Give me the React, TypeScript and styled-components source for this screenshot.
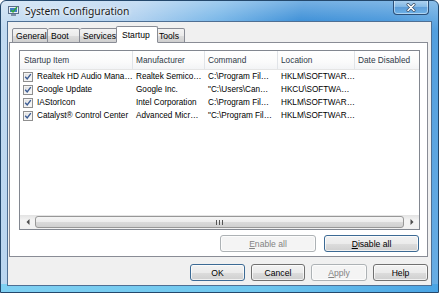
import React from "react";
import styled, { createGlobalStyle } from "styled-components";

const Global = createGlobalStyle`
  html, body { margin: 0; padding: 0; background: #fff; }
  body { font-family: "Liberation Sans", Arial, sans-serif; }
`;

const Window = styled.div`
  box-sizing: border-box;
  width: 439px;
  height: 293px;
  border: 1px solid #24486c;
  border-radius: 6px 6px 0 0;
  background:
    linear-gradient(to bottom, rgba(255,255,255,0.35) 0px, rgba(255,255,255,0.1) 20px, rgba(255,255,255,0) 30px),
    linear-gradient(100deg, #c3dbf1 0%, #aacdee 28%, #6cb0e6 45%, #2c86d4 62%, #3a8fd8 80%, #6aaee4 100%);
  display: flex;
  flex-direction: column;
  padding: 0 6px 6px 6px;
  position: relative;
  overflow: hidden;
  &::after {
    content: "";
    position: absolute;
    left: 0; right: 0; bottom: 0; height: 8px;
    background: linear-gradient(to right, #7fd0f2, #6ec6ee 60%, #4aa4e4);
    z-index: 0;
  }
`;

const TitleBar = styled.div`
  height: 20px;
  display: flex;
  align-items: center;
  gap: 5px;
  position: relative;
  z-index: 1;
`;

const TitleText = styled.span`
  font-family: "Noto Sans", "Liberation Sans", sans-serif;
  font-size: 10.3px;
  color: #1a1a1a;
  text-shadow: 0 0 6px rgba(255,255,255,0.9), 0 0 3px rgba(255,255,255,0.9);
`;

const CloseButton = styled.div`
  position: absolute;
  top: -1px;
  right: 3px;
  width: 36px;
  height: 15px;
  box-sizing: border-box;
  border: 1px solid #2c4f78;
  border-top: none;
  border-radius: 0 0 4px 4px;
  background: linear-gradient(to bottom, rgba(255,255,255,0.35), rgba(255,255,255,0.08) 50%, rgba(40,110,190,0.3) 51%, rgba(120,190,240,0.4));
  box-shadow: inset 0 0 0 1px rgba(255,255,255,0.45);
  display: flex;
  align-items: center;
  justify-content: center;
`;

const Client = styled.div`
  flex: 1;
  box-sizing: border-box;
  background: #f0f0f0;
  border: 1px solid #4f6f93;
  display: flex;
  flex-direction: column;
  padding: 5px 3px 3px 1px;
  position: relative;
  z-index: 1;
`;

const TabRow = styled.div`
  display: flex;
  align-items: flex-end;
  height: 16px;
  padding-left: 3px;
  position: relative;
  z-index: 2;
  margin-bottom: -1px;
`;

const Tab = styled.div<{ $active?: boolean; $w: number }>`
  box-sizing: border-box;
  width: ${(p) => p.$w}px;
  height: ${(p) => (p.$active ? 17 : 15)}px;
  margin: ${(p) => (p.$active ? "0 -2px 0 -2px" : "0")};
  border: 1px solid #898c95;
  border-left-width: ${(p) => (p.$active ? 1 : 0)}px;
  border-bottom: ${(p) => (p.$active ? "1px solid #fff" : "1px solid #898c95")};
  border-radius: 2px 2px 0 0;
  background: ${(p) =>
    p.$active ? "#fff" : "linear-gradient(to bottom, #f3f3f3 0%, #ebebeb 50%, #dddddd 51%, #cfcfcf 100%)"};
  font-size: 8.6px;
  color: #000;
  display: flex;
  align-items: center;
  padding-left: ${(p) => (p.$active ? 5 : 3)}px;
  position: relative;
  z-index: ${(p) => (p.$active ? 3 : 1)};
  &:first-child { border-left-width: 1px; }
`;

const Panel = styled.div`
  box-sizing: border-box;
  height: 215px;
  border: 1px solid #898c95;
  background: #fff;
  display: flex;
  flex-direction: column;
  padding: 7px 7px 0 9px;
`;

const List = styled.div`
  box-sizing: border-box;
  height: 180px;
  border: 1px solid #828790;
  background: #fff;
  display: flex;
  flex-direction: column;
`;

const Cols = "113px 72px 73px 77px 1fr";

const Header = styled.div`
  display: grid;
  grid-template-columns: ${Cols};
  height: 18px;
  flex-shrink: 0;
  background: linear-gradient(to bottom, #ffffff, #fbfbfb 60%, #f3f4f6);
  border-bottom: 1px solid #e5e5e5;
`;

const HeadCell = styled.div<{ $pad: number }>`
  font-size: 8.3px;
  color: #2f3a48;
  display: flex;
  align-items: center;
  padding-left: ${(p) => p.$pad}px;
  border-right: 1px solid #e1e4e8;
  white-space: nowrap;
  &:last-child { border-right: none; }
`;

const Rows = styled.div`
  flex: 1;
`;

const Row = styled.div`
  display: grid;
  grid-template-columns: ${Cols};
  height: 13px;
`;

const Cell = styled.div<{ $pad: number }>`
  font-size: 8.2px;
  color: #000;
  display: flex;
  align-items: center;
  gap: 4px;
  padding-left: ${(p) => p.$pad}px;
  white-space: nowrap;
`;

const Check = styled.span`
  box-sizing: border-box;
  width: 10px;
  height: 10px;
  flex-shrink: 0;
  border: 1px solid #8f8f8f;
  background: linear-gradient(135deg, #dcdcdc, #ffffff);
  box-shadow: inset 0 0 0 1px #f4f4f4;
  display: flex;
  align-items: center;
  justify-content: center;
`;

const ScrollBar = styled.div`
  height: 14px;
  flex-shrink: 0;
  display: flex;
  align-items: stretch;
  background: linear-gradient(to bottom, #e3e3e3, #f4f4f4 40%, #f0f0f0);
`;

const Arrow = styled.div`
  width: 15px;
  display: flex;
  align-items: center;
  justify-content: center;
`;

const Thumb = styled.div`
  flex: 1;
  box-sizing: border-box;
  margin: 1px 0;
  border: 1px solid #979797;
  border-radius: 3px;
  background: linear-gradient(to bottom, #f5f5f5, #ececec 50%, #dadada 51%, #d0d0d0);
  display: flex;
  align-items: center;
  justify-content: center;
`;

const ButtonRow = styled.div<{ $gap: number; $mt: number }>`
  display: flex;
  justify-content: flex-end;
  gap: ${(p) => p.$gap}px;
  margin-top: ${(p) => p.$mt}px;
`;

const Button = styled.div<{ $w: number; $disabled?: boolean; $default?: boolean }>`
  box-sizing: border-box;
  width: ${(p) => p.$w}px;
  height: 17px;
  border-radius: 3px;
  border: 1px solid ${(p) => (p.$disabled ? "#adb2b5" : p.$default ? "#3c6a94" : "#707070")};
  background: ${(p) =>
    p.$disabled
      ? "#f4f4f4"
      : "linear-gradient(to bottom, #f2f2f2 0%, #ebebeb 50%, #dddddd 51%, #cfcfcf 100%)"};
  box-shadow: inset 0 0 0 1px ${(p) => (p.$disabled ? "#fcfcfc" : "rgba(255,255,255,0.7)")};
  color: ${(p) => (p.$disabled ? "#838383" : "#000")};
  font-size: 8.6px;
  display: flex;
  align-items: center;
  justify-content: center;
  u { text-decoration: underline; text-underline-offset: 1px; }
`;

const PanelButtons = styled(ButtonRow)`
  padding-right: 1px;
`;

const AppIcon = () => (
  <svg width="12" height="12" viewBox="0 0 12 12" style={{ marginLeft: 1 }}>
    <rect x="0.5" y="1.5" width="10" height="7" fill="#e8eef5" stroke="#5a6f8a" />
    <rect x="2" y="3" width="7" height="4" fill="#3f7fc8" />
    <rect x="3" y="9" width="5" height="2" fill="#7b8ea6" />
    <path d="M3 5 L5 7 L9 2" stroke="#3a3" strokeWidth="1.3" fill="none" />
  </svg>
);

const CheckMark = () => (
  <svg width="8" height="8" viewBox="0 0 8 8">
    <path d="M1.2 3.8 L3.2 6 L6.8 1.2" stroke="#3b5c94" strokeWidth="1.4" fill="none" />
  </svg>
);

const tabs = [
  { label: "General", w: 36 },
  { label: "Boot", w: 32 },
  { label: "Services", w: 38 },
  { label: "Startup", w: 42, active: true },
  { label: "Tools", w: 29 },
];

const rows = [
  ["Realtek HD Audio Mana…", "Realtek Semico…", "C:\\Program Fil…", "HKLM\\SOFTWAR…"],
  ["Google Update", "Google Inc.", "\"C:\\Users\\Can…", "HKCU\\SOFTWA…"],
  ["IAStorIcon", "Intel Corporation", "C:\\Program Fil…", "HKLM\\SOFTWAR…"],
  ["Catalyst® Control Center", "Advanced Micr…", "\"C:\\Program Fil…", "HKLM\\SOFTWAR…"],
];

export default function App() {
  return (
    <>
      <Global />
      <Window>
        <TitleBar>
          <AppIcon />
          <TitleText>System Configuration</TitleText>
          <CloseButton>
            <svg width="10" height="9" viewBox="0 0 10 9">
              <path d="M2 1.5 L8 7.5 M8 1.5 L2 7.5" stroke="#3d5168" strokeWidth="3" strokeLinecap="round" />
              <path d="M2 1.5 L8 7.5 M8 1.5 L2 7.5" stroke="#fff" strokeWidth="1.6" strokeLinecap="round" />
            </svg>
          </CloseButton>
        </TitleBar>
        <Client>
          <TabRow>
            {tabs.map((t) => (
              <Tab key={t.label} $w={t.w} $active={t.active}>
                {t.label}
              </Tab>
            ))}
          </TabRow>
          <Panel>
            <List>
              <Header>
                <HeadCell $pad={4}>Startup Item</HeadCell>
                <HeadCell $pad={3}>Manufacturer</HeadCell>
                <HeadCell $pad={3}>Command</HeadCell>
                <HeadCell $pad={3}>Location</HeadCell>
                <HeadCell $pad={3}>Date Disabled</HeadCell>
              </Header>
              <Rows>
                {rows.map((r, i) => (
                  <Row key={i}>
                    <Cell $pad={3}>
                      <Check>
                        <CheckMark />
                      </Check>
                      {r[0]}
                    </Cell>
                    <Cell $pad={3}>{r[1]}</Cell>
                    <Cell $pad={3}>{r[2]}</Cell>
                    <Cell $pad={3}>{r[3]}</Cell>
                    <Cell $pad={3}></Cell>
                  </Row>
                ))}
              </Rows>
              <ScrollBar>
                <Arrow>
                  <svg width="4" height="6" viewBox="0 0 4 6">
                    <path d="M3.5 0 L0.5 3 L3.5 6 Z" fill="#4d4d4d" />
                  </svg>
                </Arrow>
                <Thumb>
                  <svg width="7" height="5" viewBox="0 0 7 5">
                    <path d="M0.5 0 V5 M3.5 0 V5 M6.5 0 V5" stroke="#555" strokeWidth="1" />
                  </svg>
                </Thumb>
                <Arrow>
                  <svg width="4" height="6" viewBox="0 0 4 6">
                    <path d="M0.5 0 L3.5 3 L0.5 6 Z" fill="#4d4d4d" />
                  </svg>
                </Arrow>
              </ScrollBar>
            </List>
            <PanelButtons $gap={8} $mt={5}>
              <Button $w={96} $disabled>
                <span><u>E</u>nable all</span>
              </Button>
              <Button $w={95} $default>
                <span><u>D</u>isable all</span>
              </Button>
            </PanelButtons>
          </Panel>
          <ButtonRow $gap={6} $mt={7}>
            <Button $w={55} $default>OK</Button>
            <Button $w={54}>Cancel</Button>
            <Button $w={56} $disabled>
              <span><u>A</u>pply</span>
            </Button>
            <Button $w={55}>Help</Button>
          </ButtonRow>
        </Client>
      </Window>
    </>
  );
}
